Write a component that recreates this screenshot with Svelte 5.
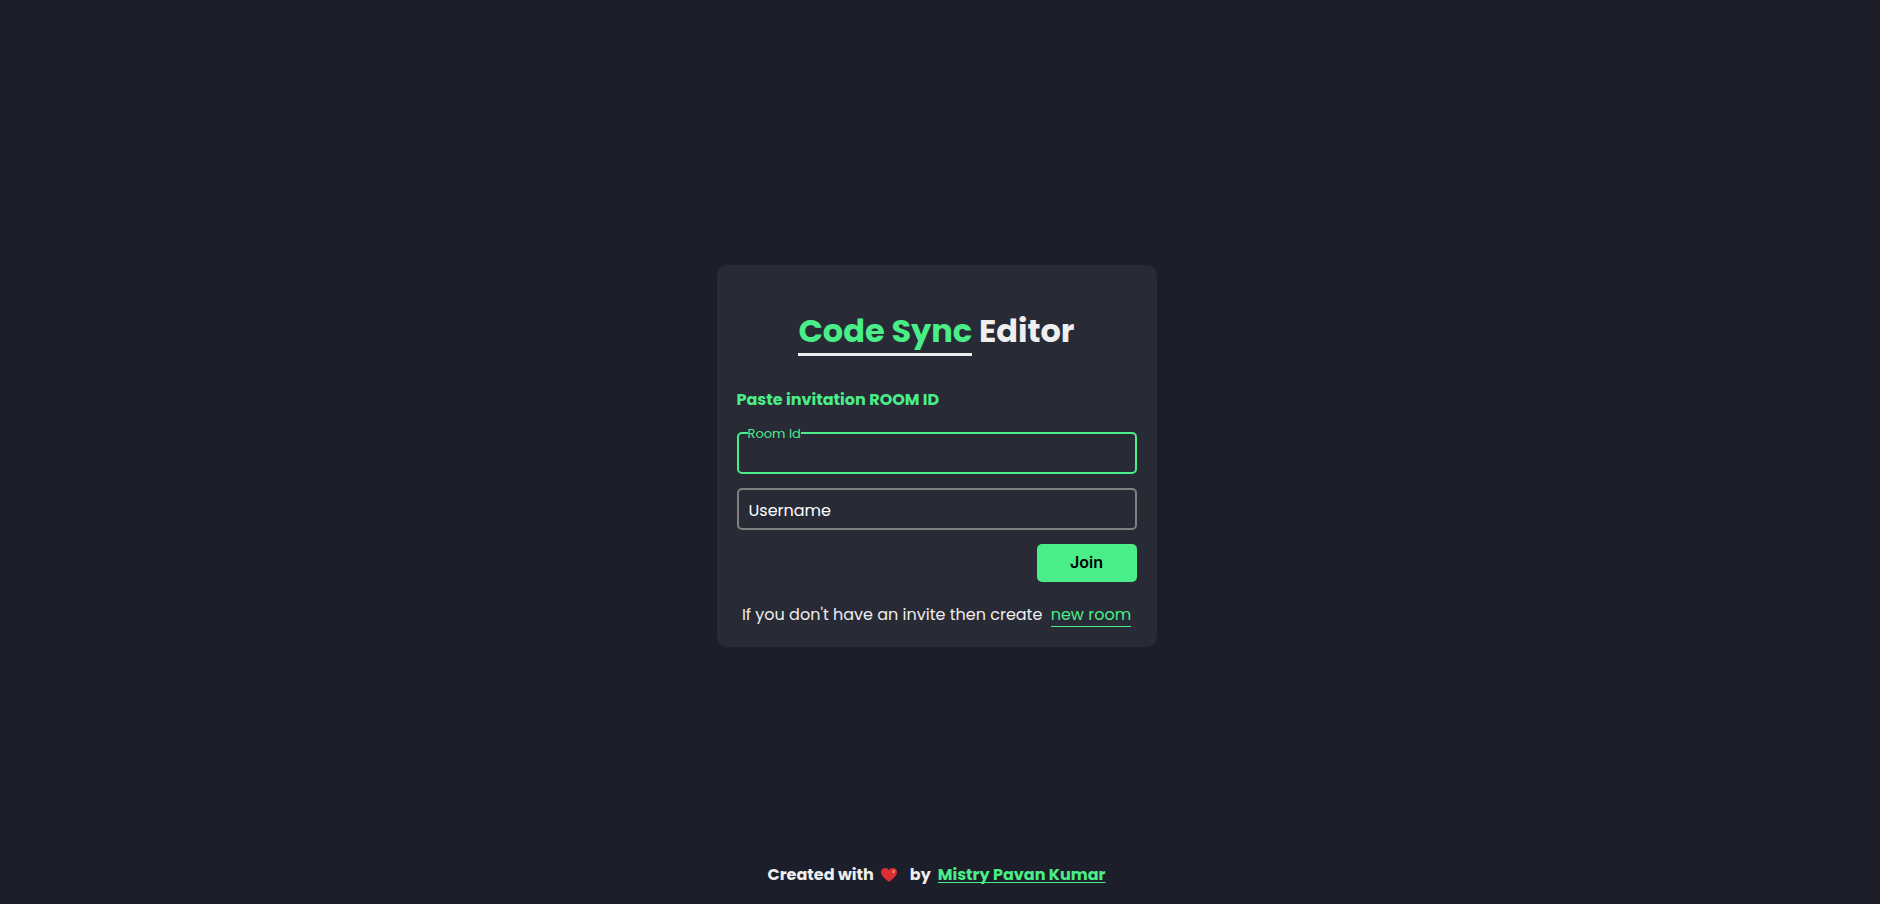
<script>
  let roomId = $state('');
  let username = $state('');
</script>

<div class="page">
  <main>
    <form class="card" onsubmit={(e) => e.preventDefault()}>
      <h1><span>Code Sync</span> Editor</h1>
      <h2>Paste invitation ROOM ID</h2>
      <div class="field active">
        <input id="room" type="text" bind:value={roomId} />
        <label for="room">Room Id</label>
      </div>
      <div class="field">
        <input id="username" type="text" bind:value={username} />
        <label for="username">Username</label>
      </div>
      <button type="submit">Join</button>
      <p>If you don't have an invite then create <a href="#new">new room</a></p>
    </form>
  </main>
  <footer>
    <span>Created with</span>
    <svg class="heart" viewBox="0 0 16 14" aria-hidden="true">
      <path fill="#dd2e36" d="M8 14C6.5 12.6 0 8.6 0 4.1C0 1.7 1.8 0 4 0C5.8 0 7.2 .9 8 2.3C8.8 .9 10.2 0 12 0C14.2 0 16 1.7 16 4.1C16 8.6 9.500 12.600 8 14Z" />
      <path fill="#e9a35a" d="M13.600 1.800C14.200 3 13.600 4.600 12.200 5.600C12.300 4.800 12 4.400 11 4.400C11.400 3 12.300 2 13.600 1.800Z" />
    </svg>
    <span>by</span>
    <a href="#author">Mistry Pavan Kumar</a>
  </footer>
</div>

<style>
  :global(body) {
    margin: 0;
    background: #1c1e29;
  }
  .page {
    box-sizing: border-box;
    min-height: 100vh;
    padding: 8px 7px 0 0;
    display: grid;
    grid-template-rows: 1fr auto;
    font-family: Poppins, Inter, sans-serif;
    font-size: 16px;
    line-height: 24px;
    color: #eee;
    background: #1c1e29;
  }
  main {
    grid-area: 1 / 1 / 3 / 2;
    display: flex;
    align-items: center;
    justify-content: center;
  }
  .card {
    box-sizing: border-box;
    width: 440px;
    max-width: 100%;
    padding: 40px 20px 20px;
    border-radius: 10px;
    background: #282a36;
    display: flex;
    flex-direction: column;
  }
  h1 {
    margin: 0 0 31px;
    font-size: 32px;
    line-height: 52px;
    text-align: center;
  }
  h1 span {
    color: #4aee88;
    border-bottom: 3px solid #eee;
  }
  h2 {
    margin: 0 0 20px;
    font-size: 16px;
    line-height: 24px;
    color: #4aee88;
  }
  .field {
    position: relative;
    margin-bottom: 14px;
  }
  .field input {
    display: block;
    box-sizing: border-box;
    width: 100%;
    height: 42px;
    padding: 8px 10px;
    border: 2px solid #808080;
    border-radius: 5px;
    outline: none;
    background: transparent;
    color: #eee;
    font: inherit;
  }
  .field label {
    position: absolute;
    left: 12px;
    top: 11px;
    color: #fff;
    pointer-events: none;
  }
  .active input {
    border-color: #4aee88;
  }
  .active label {
    top: -8px;
    left: 11px;
    font-size: 13px;
    line-height: 20px;
    color: #4aee88;
    background: #282a36;
  }
  button {
    align-self: flex-end;
    width: 100px;
    height: 38px;
    padding: 0 0 2px;
    border: none;
    border-radius: 5px;
    background: #4aee88;
    color: #000;
    font: 600 16px Inter, sans-serif;
    cursor: pointer;
  }
  p {
    margin: 21px 0 0;
    text-align: center;
    white-space: nowrap;
  }
  a {
    color: #4aee88;
  }
  p a {
    margin-left: 4px;
    text-decoration: none;
    border-bottom: 1px solid #4aee88;
  }
  footer {
    grid-area: 2 / 1 / 3 / 2;
    display: flex;
    align-items: center;
    justify-content: center;
    padding-bottom: 17px;
    font-weight: 700;
  }
  .heart {
    width: 16px;
    height: 14px;
    margin: 0 13px 0 7px;
  }
  footer a {
    margin-left: 7px;
    text-underline-offset: 2px;
    text-decoration-thickness: 1px;
    text-decoration-skip-ink: none;
  }
</style>
